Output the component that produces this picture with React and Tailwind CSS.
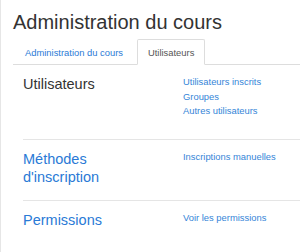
import React from 'react';

const sections = [
  {
    title: 'Utilisateurs',
    muted: true,
    links: ['Utilisateurs inscrits', 'Groupes', 'Autres utilisateurs'],
  },
  {
    title: "Méthodes d'inscription",
    links: ['Inscriptions manuelles'],
  },
  {
    title: 'Permissions',
    links: ['Voir les permissions'],
  },
];

const App = () => {
  return (
    <div
      className="min-h-[252px] w-[300px] overflow-hidden bg-white border-l border-[#e6e6e6] pl-[12px] pt-[10px]"
      style={{ fontFamily: '"Liberation Sans", Arial, sans-serif' }}
    >
      <h2 className="text-[20px] leading-[24px] text-[#333] whitespace-nowrap mb-[5px]">
        Administration du cours
      </h2>

      <ul className="flex border-b border-[#ddd] whitespace-nowrap">
        <li className="-mb-px mr-[2px]">
          <a className="block border border-transparent px-[11px] pt-[7px] pb-[5px] text-[9.4px] leading-[12px] text-[#2a7ad6]">
            Administration du cours
          </a>
        </li>
        <li className="-mb-px">
          <a className="block border border-[#ddd] border-b-white bg-white rounded-t-[2px] px-[10px] pt-[7px] pb-[5px] text-[9.4px] leading-[12px] text-[#555]">
            Utilisateurs
          </a>
        </li>
      </ul>

      <div className="pl-[10px]">
        {sections.map((section, i) => (
          <div
            key={section.title}
            className={`flex pt-[10px] pb-[14px] ${i > 0 ? 'border-t border-[#e5e5e5]' : ''}`}
          >
            <div className="w-[160px] shrink-0 pr-[20px]">
              <h3
                className={`text-[14.5px] leading-[18px] ${section.muted ? 'text-[#333]' : 'text-[#2a7ad6]'}`}
              >
                {section.title}
              </h3>
            </div>
            <ul className="mb-[6px]">
              {section.links.map((link) => (
                <li key={link} className="text-[9.4px] leading-[14.5px] text-[#3585d8] whitespace-nowrap">
                  {link}
                </li>
              ))}
            </ul>
          </div>
        ))}
      </div>
    </div>
  );
};

export default App;
